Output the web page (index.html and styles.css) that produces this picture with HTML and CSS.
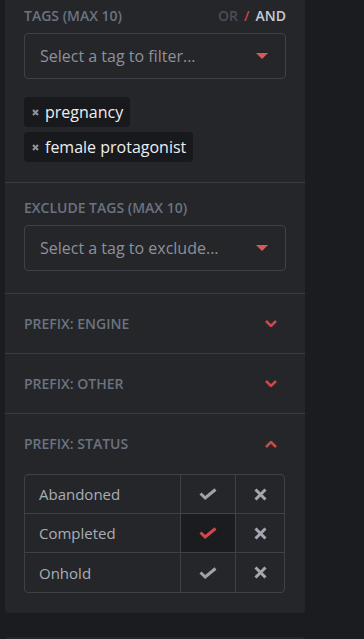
FILE: index.html
```html
<!DOCTYPE html>
<html lang="en">
  <head>
    <meta charset="UTF-8" />
    <meta name="viewport" content="width=device-width, initial-scale=1.0" />
    <title>Filters</title>
    <link rel="stylesheet" href="styles.css">
  </head>
  <body>
    <div class="panel">
      <section class="block">
        <div class="block-head">
          <span class="label">Tags (max 10)</span>
          <span class="mode">
            <span class="mode-off">OR</span>
            <span class="mode-sep">/</span>
            <span class="mode-on">AND</span>
          </span>
        </div>
        <div class="select">
          <span>Select a tag to filter...</span>
          <svg class="caret" width="12" height="6" viewBox="0 0 12 6"><polygon points="0,0 12,0 6,6" /></svg>
        </div>
        <div class="chips">
          <span class="chip">
            <svg class="chip-x" width="7" height="7" viewBox="0 0 7 7"><path d="M1 1L6 6M6 1L1 6" /></svg>
            pregnancy
          </span>
          <span class="chip">
            <svg class="chip-x" width="7" height="7" viewBox="0 0 7 7"><path d="M1 1L6 6M6 1L1 6" /></svg>
            female protagonist
          </span>
        </div>
      </section>

      <section class="block block-exclude">
        <div class="block-head">
          <span class="label">Exclude tags (max 10)</span>
        </div>
        <div class="select">
          <span>Select a tag to exclude...</span>
          <svg class="caret" width="12" height="6" viewBox="0 0 12 6"><polygon points="0,0 12,0 6,6" /></svg>
        </div>
      </section>

      <section class="fold">
        <div class="fold-head">
          <span class="label">Prefix: Engine</span>
          <svg class="chevron" width="12" height="7" viewBox="0 0 12 7"><polyline points="1,1 6,6 11,1" /></svg>
        </div>
      </section>

      <section class="fold">
        <div class="fold-head">
          <span class="label">Prefix: Other</span>
          <svg class="chevron" width="12" height="7" viewBox="0 0 12 7"><polyline points="1,1 6,6 11,1" /></svg>
        </div>
      </section>

      <section class="fold fold-open">
        <div class="fold-head">
          <span class="label">Prefix: Status</span>
          <svg class="chevron" width="12" height="7" viewBox="0 0 12 7"><polyline points="1,6 6,1 11,6" /></svg>
        </div>
        <table class="status">
          <tr>
            <td class="name">Abandoned</td>
            <td class="pick"><svg class="tick" width="18" height="12" viewBox="0 0 18 12"><polyline points="1.5,5.5 6.2,10 16.5,1.5" /></svg></td>
            <td class="pick"><svg class="cross" width="13" height="13" viewBox="0 0 13 13"><path d="M1.5 1.5L11.5 11.5M11.5 1.5L1.5 11.5" /></svg></td>
          </tr>
          <tr>
            <td class="name">Completed</td>
            <td class="pick active"><svg class="tick" width="18" height="12" viewBox="0 0 18 12"><polyline points="1.5,5.5 6.2,10 16.5,1.5" /></svg></td>
            <td class="pick"><svg class="cross" width="13" height="13" viewBox="0 0 13 13"><path d="M1.5 1.5L11.5 11.5M11.5 1.5L1.5 11.5" /></svg></td>
          </tr>
          <tr>
            <td class="name">Onhold</td>
            <td class="pick"><svg class="tick" width="18" height="12" viewBox="0 0 18 12"><polyline points="1.5,5.5 6.2,10 16.5,1.5" /></svg></td>
            <td class="pick"><svg class="cross" width="13" height="13" viewBox="0 0 13 13"><path d="M1.5 1.5L11.5 11.5M11.5 1.5L1.5 11.5" /></svg></td>
          </tr>
        </table>
      </section>
    </div>

    <div class="panel panel-next"></div>
  </body>
</html>
```

FILE: styles.css
```css
* {
  box-sizing: border-box;
}

body {
  margin: 0;
  background: #1b1c1f;
  font-family: "Open Sans", "Noto Sans", sans-serif;
  color: #a9aeb6;
}

.panel {
  width: 300px;
  margin: -9px 0 0 5px;
  background: #25262a;
  border-radius: 0 0 4px 4px;
}

.panel-next {
  margin-top: 24px;
  height: 40px;
  border-radius: 4px;
}

.block {
  padding: 17px 19px 20px;
  border-bottom: 1px solid #3a3c41;
}

.block-exclude {
  padding-bottom: 22px;
}

.block-head {
  display: flex;
  justify-content: space-between;
  align-items: center;
  margin-bottom: 9px;
}

.label {
  font-size: 14px;
  line-height: 16px;
  font-weight: 600;
  text-transform: uppercase;
  color: #6b7380;
}

.mode {
  display: inline-flex;
  gap: 6px;
  font-size: 14px;
  line-height: 16px;
  font-weight: 600;
}

.mode-off {
  color: #4a4e55;
}

.mode-sep {
  color: #c4454a;
}

.mode-on {
  color: #c7ccd4;
}

.select {
  height: 46px;
  display: flex;
  justify-content: space-between;
  align-items: center;
  padding: 0 17px 0 15px;
  border: 1px solid #3e4147;
  border-radius: 4px;
  font-size: 16px;
  color: #8c9199;
}

.caret {
  fill: #d9585c;
}

.chips {
  display: flex;
  flex-wrap: wrap;
  align-items: flex-start;
  gap: 5px;
  margin-top: 18px;
}

.chip {
  height: 30px;
  display: inline-flex;
  align-items: center;
  gap: 6px;
  padding: 0 7px 0 8px;
  background: #18191c;
  border-radius: 4px;
  font-size: 16px;
  color: #eceef1;
}

.chip-x {
  stroke: #8c9097;
  stroke-width: 2.2;
  fill: none;
}

.fold {
  border-bottom: 1px solid #3a3c41;
}

.fold:last-child {
  border-bottom: none;
  padding-bottom: 20px;
}

.fold-head {
  height: 59px;
  display: flex;
  justify-content: space-between;
  align-items: center;
  padding: 0 28px 0 19px;
}

.fold-open .fold-head {
  height: 60px;
}

.chevron {
  fill: none;
  stroke: #c9494d;
  stroke-width: 2.5;
}

.status {
  width: 261px;
  margin-left: 19px;
  border-collapse: separate;
  border-spacing: 0;
  border: 1px solid #3e4147;
  border-radius: 4px;
  font-size: 15px;
}

.status td {
  height: 39px;
  padding: 0;
  border-bottom: 1px solid #3e4147;
}

.status tr:last-child td {
  border-bottom: none;
}

.status .name {
  width: 156px;
  padding-left: 14px;
  color: #a9aeb6;
  border-right: 1px solid #3e4147;
}

.status .pick {
  text-align: center;
  vertical-align: middle;
}

.status .pick svg {
  display: block;
  margin: 0 auto;
}

.status .pick + .pick {
  border-left: 1px solid #3e4147;
  width: 49px;
}

.status .active {
  background: #1b1c1f;
}

.tick {
  fill: none;
  stroke: #9da3ab;
  stroke-width: 3;
}

.active .tick {
  stroke: #d2474c;
}

.cross {
  stroke: #a3a8b0;
  stroke-width: 3;
}
```
